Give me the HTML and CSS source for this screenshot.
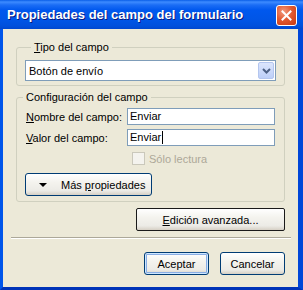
FILE: index.html
```html
<!DOCTYPE html>
<html>
<head>
<meta charset="utf-8">
<link rel="stylesheet" href="styles.css">
</head>
<body>
<div class="window">
  <div class="titlebar">
    <span class="title">Propiedades del campo del formulario</span>
    <div class="close">
      <svg width="11" height="11" viewBox="0 0 11 11"><path d="M1.5 1.5 L9.5 9.5 M9.5 1.5 L1.5 9.5" stroke="#fff" stroke-width="2" stroke-linecap="square"/></svg>
    </div>
  </div>
  <div class="frame">
    <div class="client">
      <fieldset class="group g1">
        <legend><u>T</u>ipo del campo</legend>
        <div class="select">
          <span class="sel-text">Botón de envío</span>
          <span class="sel-btn"><svg width="9" height="6" viewBox="0 0 9 6"><path d="M1 1 L4.5 4.5 L8 1" fill="none" stroke="#4D6185" stroke-width="2"/></svg></span>
        </div>
      </fieldset>
      <fieldset class="group g2">
        <legend>Configuración del campo</legend>
        <div class="row"><span class="lbl"><u>N</u>ombre del campo:</span><div class="input">Enviar</div></div>
        <div class="row"><span class="lbl"><u>V</u>alor del campo:</span><div class="input">Enviar<span class="caret"></span></div></div>
        <div class="check-row"><span class="checkbox"></span><span class="disabled">Sólo lectura</span></div>
        <button class="btn more"><span class="tri"></span><span>Más <u>p</u>ropiedades</span></button>
      </fieldset>
      <div class="adv-row"><button class="btn adv"><u>E</u>dición avanzada...</button></div>
      <div class="sep"></div>
      <div class="footer">
        <button class="btn default">Aceptar</button>
        <button class="btn">Cancelar</button>
      </div>
    </div>
  </div>
</div>
</body>
</html>
```
FILE: styles.css
```css
* { box-sizing: border-box; }
html, body { margin: 0; padding: 0; }
body { width: 303px; height: 290px; overflow: hidden; font-family: "Liberation Sans", Arial, sans-serif; font-size: 11px; color: #000; }
.window { width: 303px; height: 290px; display: flex; flex-direction: column; }
.titlebar {
  height: 29px; flex: none; display: flex; align-items: center; justify-content: space-between;
  padding: 0 6px 0 7px;
  background: linear-gradient(#0A5EE8 0px, #3D8BFF 2px, #1B6DF5 5px, #0058EE 10px, #0055E6 20px, #0050DC 26px, #0047CF 29px);
}
.title { color: #fff; font-family: "Liberation Sans", Arial, sans-serif; font-weight: bold; font-size: 13px; text-shadow: 1px 1px 0 #0A1A80; }
.close {
  width: 21px; height: 21px; border: 1px solid #fff; border-radius: 3px;
  background: radial-gradient(circle at 35% 30%, #F29B80 0%, #E25A32 45%, #C8370F 100%);
  display: flex; align-items: center; justify-content: center; margin-top: 2px;
}
.frame { flex: 1; display: flex; border-left: 3px solid #0055EA; border-right: 5px solid #0046D8; border-bottom: 3px solid #0033B8; }
.client { flex: 1; background: #ECE9D8; padding: 12px 13px 0 13px; display: flex; flex-direction: column; }
.group { margin: 0; border: 1px solid #D0D0BF; border-radius: 3px; padding: 0 8px; min-width: 0; }
.group legend { padding: 0 3px; margin-left: 6px; line-height: 13px; }
.g1 { padding-top: 6px; padding-bottom: 4px; }
.g2 { margin-top: 5px; padding-top: 4px; padding-bottom: 5px; }
.g2 legend { margin-left: -2px; }
.select { height: 21px; border: 1px solid #7F9DB9; background: #fff; display: flex; align-items: center; padding: 0 1px 0 3px; }
.sel-text { flex: 1; }
.sel-btn { width: 16px; height: 17px; background: linear-gradient(#DCE6FD, #BDCFF8); border: 1px solid #B4C6EF; border-radius: 2px; display: flex; align-items: center; justify-content: center; }
.row { display: flex; align-items: center; height: 17px; margin-bottom: 4px; }
.lbl { width: 102px; padding-left: 1px; }
.input { width: 148px; height: 17px; border: 1px solid #7F9DB9; background: #fff; padding: 0 2px; line-height: 15px; display: flex; align-items: center; }
.caret { display: inline-block; width: 1px; height: 13px; background: #000; margin-left: 1px; }
.check-row { display: flex; align-items: center; height: 13px; margin-top: 6px; padding-left: 107px; }
.checkbox { width: 13px; height: 13px; border: 1px solid #CAC8BB; background: #F4F3EE; margin-right: 4px; }
.disabled { color: #ACA899; }
.btn {
  font-family: "Liberation Sans", Arial, sans-serif; font-size: 11px; color: #000;
  height: 23px; border: 1px solid #003C74; border-radius: 3px; padding: 0;
  background: linear-gradient(#FFFFFF 0%, #F4F3EE 40%, #ECEBE6 80%, #D6D0C5 100%);
}
.more { width: 127px; margin-top: 8px; display: flex; align-items: center; padding-left: 13px; }
.tri { width: 0; height: 0; border-left: 4px solid transparent; border-right: 4px solid transparent; border-top: 4px solid #000; margin-right: 14px; }
.adv-row { display: flex; justify-content: flex-end; margin-top: 6px; }
.adv { width: 149px; border-color: #1A1A1A; border-radius: 2px; }
.sep { height: 2px; border-top: 1px solid #ACA899; border-bottom: 1px solid #fff; margin: 6px -6px 0 -5px; }
.footer { display: flex; justify-content: flex-end; gap: 11px; margin-top: 13px; }
.footer .btn { width: 65px; }
.footer .default { box-shadow: inset 0 0 0 1px #CEE7FF, inset 0 0 0 2px #89ADE4; }
```
